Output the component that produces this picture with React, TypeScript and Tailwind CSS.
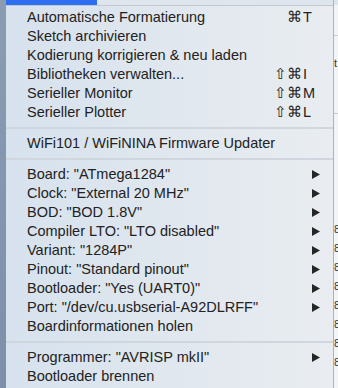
import type React from "react"

type Item =
  | { kind: "sep" }
  | { kind: "item"; label: string; mods?: string; key?: string; sub?: boolean }

const items: Item[] = [
  { kind: "item", label: "Automatische Formatierung", mods: "⌘", key: "T" },
  { kind: "item", label: "Sketch archivieren" },
  { kind: "item", label: "Kodierung korrigieren & neu laden" },
  { kind: "item", label: "Bibliotheken verwalten...", mods: "⇧⌘", key: "I" },
  { kind: "item", label: "Serieller Monitor", mods: "⇧⌘", key: "M" },
  { kind: "item", label: "Serieller Plotter", mods: "⇧⌘", key: "L" },
  { kind: "sep" },
  { kind: "item", label: "WiFi101 / WiFiNINA Firmware Updater" },
  { kind: "sep" },
  { kind: "item", label: 'Board: "ATmega1284"', sub: true },
  { kind: "item", label: 'Clock: "External 20 MHz"', sub: true },
  { kind: "item", label: 'BOD: "BOD 1.8V"', sub: true },
  { kind: "item", label: 'Compiler LTO: "LTO disabled"', sub: true },
  { kind: "item", label: 'Variant: "1284P"', sub: true },
  { kind: "item", label: 'Pinout: "Standard pinout"', sub: true },
  { kind: "item", label: 'Bootloader: "Yes (UART0)"', sub: true },
  { kind: "item", label: 'Port: "/dev/cu.usbserial-A92DLRFF"', sub: true },
  { kind: "item", label: "Boardinformationen holen" },
  { kind: "sep" },
  { kind: "item", label: 'Programmer: "AVRISP mkII"', sub: true },
  { kind: "item", label: "Bootloader brennen" },
]

function Arrow() {
  return (
    <svg width="8" height="9" viewBox="0 0 8 9" className="block">
      <path d="M0 0 L8 4.5 L0 9 Z" fill="#262626" />
    </svg>
  )
}

function Row({ item }: { item: Extract<Item, { kind: "item" }> }) {
  return (
    <div className="flex h-[19px] items-center pl-[21px] pr-[13px]">
      <span className="flex-1 whitespace-nowrap">{item.label}</span>
      {item.mods && (
        <span className="flex items-center">
          <span className="text-right">{item.mods}</span>
          <span className="ml-px w-[17px]">{item.key}</span>
        </span>
      )}
      {item.sub && <Arrow />}
    </div>
  )
}

export default function App() {
  const eights = Array.from({ length: 8 })
  return (
    <div
      className="flex h-[388px] w-[338px] overflow-hidden text-[14.5px] text-[#222]"
      style={{ fontFamily: '"Liberation Sans", Arial, sans-serif' } as React.CSSProperties}
    >
      <div className="w-[6px] bg-gradient-to-b from-[#8a9cb2] to-[#7d90a8]" />

      <div className="flex flex-1 flex-col bg-gradient-to-r from-[#d6e2ee] via-[#e0e7ee] to-[#e9edf1]">
        <div className="flex h-[5px]">
          <div className="w-[91px] bg-[#2d6ff0]" />
          <div className="flex-1 bg-[#dfe5ec]" />
        </div>
        <div className="h-px bg-[#c2c9d1]" />
        <div className="pt-[2px]">
          {items.map((item, i) =>
            item.kind === "sep" ? (
              <div key={i} className="flex h-[12px] items-center">
                <div className="h-[2px] w-full bg-[#d0d6dd]" />
              </div>
            ) : (
              <Row key={i} item={item} />
            )
          )}
        </div>
      </div>

      <div className="flex w-[5px] flex-col border-l border-[#aeb3b8] bg-[#f3f4f5] text-[11px] leading-[19px] text-[#333]">
        <div className="h-[5px] bg-[#dfe5ec]" />
        <div className="mt-[30px] h-px bg-[#c9cdd1]" />
        <div className="mt-[18px]">t</div>
        <div className="mt-[40px] h-px bg-[#c9cdd1]" />
        <div className="mt-[106px]">
          {eights.map((_, i) => (
            <div key={i}>8</div>
          ))}
        </div>
      </div>
    </div>
  )
}
